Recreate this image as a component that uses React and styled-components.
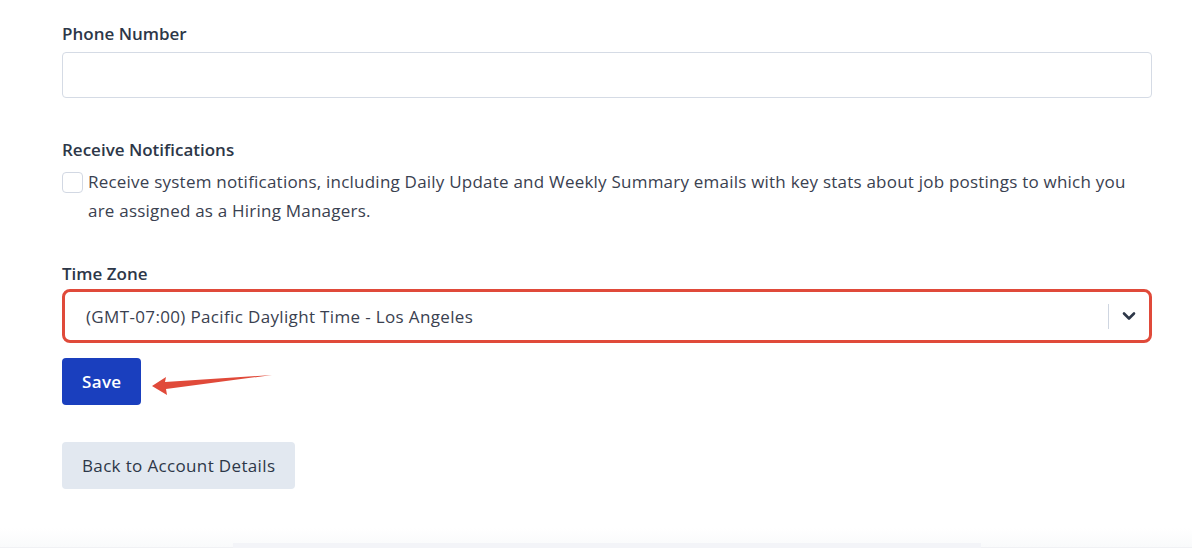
import React from "react";
import styled, { createGlobalStyle } from "styled-components";

const Global = createGlobalStyle`
  html, body { margin: 0; padding: 0; background: #fff; }
  body { font-family: "Open Sans", "Lato", sans-serif; color: #2d3748; }
  * { box-sizing: border-box; }
`;

const Page = styled.div`
  width: 1192px;
  height: 548px;
  position: relative;
  overflow: hidden;
  background: #fff;
`;

const Form = styled.form`
  display: flex;
  flex-direction: column;
  padding: 23px 40px 0 62px;
`;

const Field = styled.div`
  display: flex;
  flex-direction: column;
  margin-bottom: ${(p) => p.$gap || 0}px;
`;

const Label = styled.label`
  font-size: 17px;
  font-weight: 600;
  color: #2d3748;
  line-height: 22px;
  margin-bottom: ${(p) => p.$gap || 7}px;
`;

const TextInput = styled.input`
  width: 1090px;
  height: 46px;
  border: 1px solid #d5dbe5;
  border-radius: 4px;
  padding: 0 14px;
  font: inherit;
  font-size: 17px;
  outline: none;
`;

const CheckRow = styled.div`
  display: flex;
  align-items: flex-start;
  gap: 5px;
`;

const Box = styled.span`
  flex: none;
  width: 21px;
  height: 21px;
  margin-top: 2px;
  border: 1px solid #d2d8e3;
  border-radius: 4px;
  background: #fff;
`;

const CheckText = styled.p`
  margin: 0;
  width: 1062px;
  font-size: 17px;
  letter-spacing: 0.22px;
  line-height: 29px;
  color: #3a4150;
  margin-top: -3px;
`;

const Select = styled.div`
  position: relative;
  width: 1090px;
  height: 54px;
  border: 3px solid #e04a3a;
  border-radius: 8px;
  display: flex;
  align-items: center;
  padding-left: 21px;
`;

const SelectValue = styled.span`
  flex: 1;
  font-size: 17px;
  letter-spacing: 0.35px;
  color: #3a4150;
`;

const Divider = styled.span`
  width: 1px;
  height: 25px;
  background: #cfd6e1;
`;

const Chevron = styled.span`
  width: 40px;
  display: flex;
  justify-content: center;
  align-items: center;
  color: #2d3748;
`;

const SaveRow = styled.div`
  position: relative;
  margin-top: 15px;
  margin-bottom: 37px;
`;

const Button = styled.button`
  height: 47px;
  padding: 0 ${(p) => p.$pad}px;
  border: none;
  border-radius: 4px;
  font-family: inherit;
  font-size: 17px;
  letter-spacing: 0.35px;
  font-weight: ${(p) => (p.$primary ? 600 : 400)};
  background: ${(p) => (p.$primary ? "#1a3fbe" : "#e2e8f0")};
  color: ${(p) => (p.$primary ? "#fff" : "#2d3748")};
  cursor: pointer;
`;

const Arrow = styled.svg`
  position: absolute;
  left: 90px;
  top: 0;
`;

const FooterEdge = styled.div`
  position: absolute;
  left: 0;
  right: 0;
  bottom: 0;
  height: 20px;
  background: linear-gradient(#fff, #f9fafb);
  border-bottom: 1px solid #f0f1f4;
`;

const FooterTab = styled.div`
  position: absolute;
  left: 233px;
  width: 748px;
  bottom: 0;
  height: 5px;
  background: #f3f4f8;
`;

export default function App() {
  return (
    <Page>
      <Global />
      <Form onSubmit={(e) => e.preventDefault()}>
        <Field $gap={41}>
          <Label>Phone Number</Label>
          <TextInput type="tel" />
        </Field>
        <Field $gap={38}>
          <Label $gap={9}>Receive Notifications</Label>
          <CheckRow>
            <Box />
            <CheckText>
              Receive system notifications, including Daily Update and Weekly Summary emails with key stats about job
              postings to which you are assigned as a Hiring Managers.
            </CheckText>
          </CheckRow>
        </Field>
        <Field>
          <Label $gap={4}>Time Zone</Label>
          <Select>
            <SelectValue>(GMT-07:00) Pacific Daylight Time - Los Angeles</SelectValue>
            <Divider />
            <Chevron>
              <svg width="14" height="10" viewBox="0 0 14 10">
                <path d="M2 2.5 L7 7.5 L12 2.5" fill="none" stroke="currentColor" strokeWidth="2.6" strokeLinecap="round" strokeLinejoin="round" />
              </svg>
            </Chevron>
          </Select>
        </Field>
        <SaveRow>
          <Button type="submit" $primary $pad={20}>Save</Button>
          <Arrow width="130" height="40" viewBox="0 0 130 40">
            <path d="M0 28 L14 19 L13 24 L120 17 L14 31 L15 37 Z" fill="#e04a3a" />
          </Arrow>
        </SaveRow>
        <div>
          <Button type="button" $pad={20}>Back to Account Details</Button>
        </div>
      </Form>
      <FooterEdge />
      <FooterTab />
    </Page>
  );
}
